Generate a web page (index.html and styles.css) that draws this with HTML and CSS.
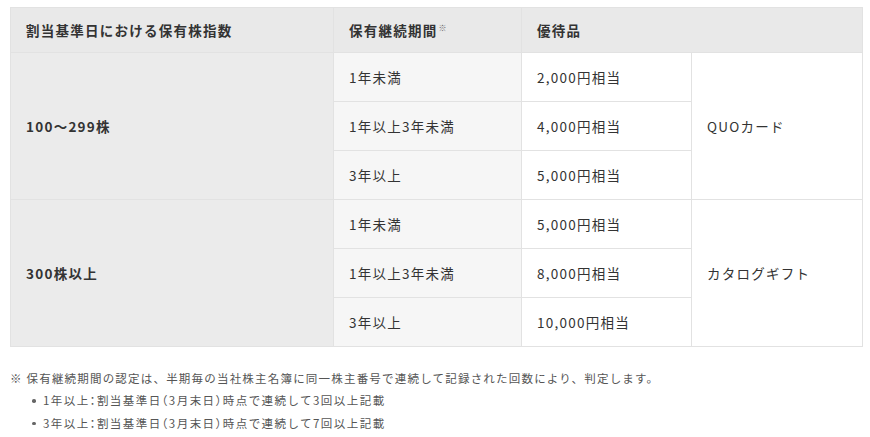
FILE: index.html
```html
<!DOCTYPE html>
<html lang="ja">
<head>
<meta charset="utf-8">
<link rel="stylesheet" href="styles.css">
</head>
<body>
<div class="wrap">
  <table class="benefit">
    <colgroup>
      <col class="c1"><col class="c2"><col class="c3"><col class="c4">
    </colgroup>
    <thead>
      <tr>
        <th>割当基準日における保有株指数</th>
        <th>保有継続期間<sup class="mark">※</sup></th>
        <th colspan="2">優待品</th>
      </tr>
    </thead>
    <tbody>
      <tr>
        <td class="shares" rowspan="3">100〜299株</td>
        <td class="period">1年未満</td>
        <td>2,000円相当</td>
        <td class="gift" rowspan="3">QUOカード</td>
      </tr>
      <tr>
        <td class="period">1年以上3年未満</td>
        <td>4,000円相当</td>
      </tr>
      <tr>
        <td class="period">3年以上</td>
        <td>5,000円相当</td>
      </tr>
      <tr>
        <td class="shares" rowspan="3">300株以上</td>
        <td class="period">1年未満</td>
        <td>5,000円相当</td>
        <td class="gift" rowspan="3">カタログギフト</td>
      </tr>
      <tr>
        <td class="period">1年以上3年未満</td>
        <td>8,000円相当</td>
      </tr>
      <tr>
        <td class="period">3年以上</td>
        <td>10,000円相当</td>
      </tr>
    </tbody>
  </table>
  <div class="notes">
    <p class="note">※ 保有継続期間の認定は、半期毎の当社株主名簿に同一株主番号で連続して記録された回数により、判定します。</p>
    <ul class="list">
      <li>1年以上<span class="p">：</span>割当基準日<span class="p">（</span>3月末日<span class="p">）</span>時点で連続して3回以上記載</li>
      <li>3年以上<span class="p">：</span>割当基準日<span class="p">（</span>3月末日<span class="p">）</span>時点で連続して7回以上記載</li>
    </ul>
  </div>
</div>
</body>
</html>
```
FILE: styles.css
```css
* { box-sizing: border-box; }
html, body { margin: 0; padding: 0; background: #fff; }
body {
  font-family: "Noto Sans CJK JP", "Noto Sans", sans-serif;
  color: #333;
}
.wrap { padding: 7px 8px 0 10px; }
.benefit {
  width: 852px;
  border-collapse: collapse;
  table-layout: fixed;
  font-size: 13.5px;
  letter-spacing: 1.25px;
}
.c1 { width: 323px; }
.c2 { width: 188px; }
.c3 { width: 170px; }
.c4 { width: 171px; }
.benefit th, .benefit td {
  border: 1px solid #e2e2e2;
  padding: 0 15px;
  text-align: left;
  vertical-align: middle;
  line-height: 20px;
}
.benefit th {
  height: 45px;
  background: #e9e9e9;
  font-weight: 700;
}
.benefit td { height: 49px; background: #fff; font-weight: 400; }
.benefit td.shares { background: #ebebeb; font-weight: 700; }
.benefit td.period { background: #f6f6f6; }
.mark {
  font-size: 8px;
  font-weight: 400;
  color: #666;
  vertical-align: top;
  position: relative;
  top: -2px;
  margin-left: 1px;
}
.notes {
  margin-top: 20px;
  font-size: 11.5px;
  color: #555;
  letter-spacing: 1.2px;
}
.note { margin: 0; line-height: 22px; }
.list {
  margin: 0;
  padding: 0 0 0 33px;
  line-height: 22.5px;
  letter-spacing: 1.45px;
}
.list .p { font-feature-settings: "halt"; }
.list li { list-style: none; position: relative; }
.list li::before {
  content: "";
  position: absolute;
  left: -11px;
  top: 10px;
  width: 3.5px;
  height: 3.5px;
  border-radius: 50%;
  background: #666;
}
```
